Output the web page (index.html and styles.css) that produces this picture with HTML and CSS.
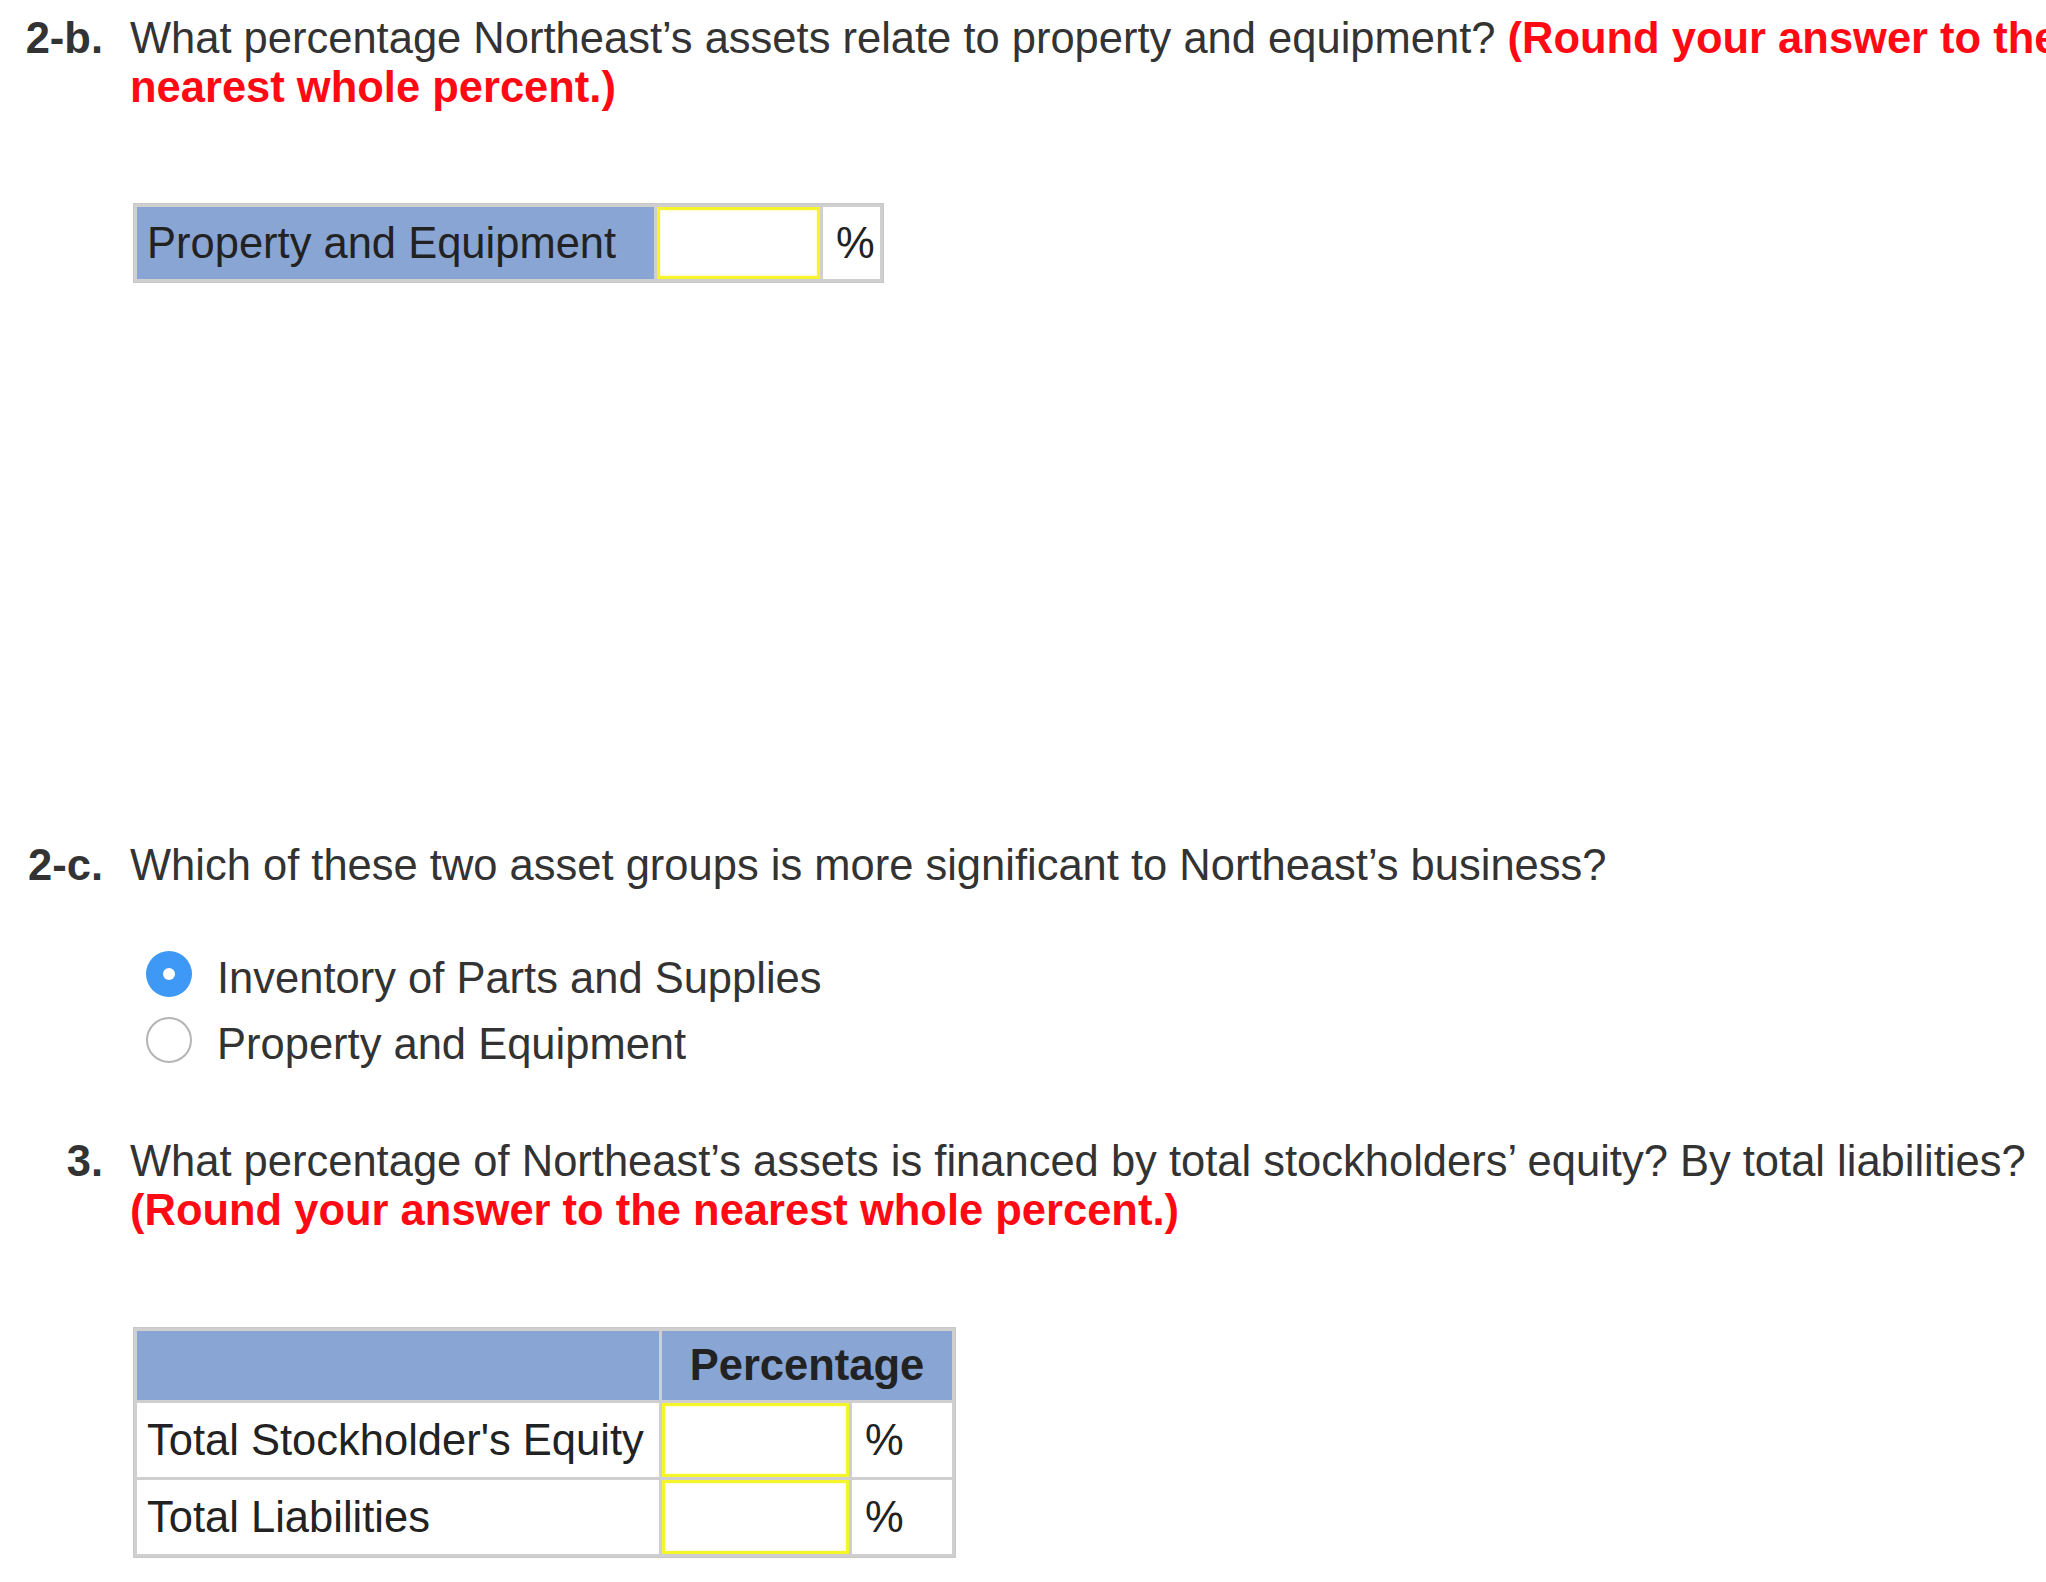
FILE: index.html
```html
<!DOCTYPE html>
<html lang="en">
<head>
<meta charset="utf-8">
<title>Questions</title>
<link rel="stylesheet" href="styles.css">
</head>
<body>
<div class="page">
  <section class="q q-2b">
    <div class="q-num">2-b.</div>
    <div class="q-body">
      <p class="q-text">What percentage Northeast’s assets relate to property and equipment? <span class="note">(Round your answer to the</span><br><span class="note">nearest whole percent.)</span></p>
      <table class="grid grid-one">
        <tr>
          <td class="head-cell label-one">Property and Equipment</td>
          <td class="input-cell in-one"><div class="answer"></div></td>
          <td class="unit-cell unit-one">%</td>
        </tr>
      </table>
    </div>
  </section>

  <section class="q q-2c">
    <div class="q-num">2-c.</div>
    <div class="q-body">
      <p class="q-text">Which of these two asset groups is more significant to Northeast’s business?</p>
      <div class="options">
        <div class="option"><span class="radio checked"></span><span class="opt-text">Inventory of Parts and Supplies</span></div>
        <div class="option"><span class="radio"></span><span class="opt-text">Property and Equipment</span></div>
      </div>
    </div>
  </section>

  <section class="q q-3">
    <div class="q-num">3.</div>
    <div class="q-body">
      <p class="q-text">What percentage of Northeast’s assets is financed by total stockholders’ equity? By total liabilities?<br><span class="note">(Round your answer to the nearest whole percent.)</span></p>
      <table class="grid grid-two">
        <tr class="hdr">
          <td class="head-cell label-two"></td>
          <td class="head-cell pct-head" colspan="2">Percentage</td>
        </tr>
        <tr class="row">
          <td class="row-label">Total Stockholder's Equity</td>
          <td class="input-cell in-two"><div class="answer"></div></td>
          <td class="unit-cell unit-two">%</td>
        </tr>
        <tr class="row">
          <td class="row-label">Total Liabilities</td>
          <td class="input-cell in-two"><div class="answer"></div></td>
          <td class="unit-cell unit-two">%</td>
        </tr>
      </table>
    </div>
  </section>
</div>
</body>
</html>
```

FILE: styles.css
```css
html, body {
  margin: 0;
  padding: 0;
  background: #ffffff;
}

body {
  width: 2046px;
  height: 1582px;
  overflow: hidden;
  font-family: "Liberation Sans", Arial, Helvetica, sans-serif;
  font-size: 43.5px;
  line-height: 49px;
  color: #333333;
}

.page {
  padding-top: 14px;
}

.q {
  display: flex;
  align-items: flex-start;
}

.q-num {
  flex: none;
  width: 103px;
  text-align: right;
  font-weight: bold;
  white-space: nowrap;
}

.q-body {
  margin-left: 27px;
  flex: 1;
  min-width: 0;
}

.q-text {
  margin: 0;
  white-space: nowrap;
}

.note {
  color: #ff0a14;
  font-weight: bold;
}

.q-2c {
  margin-top: 558px;
}

.q-3 {
  margin-top: 66px;
}

/* tables */
.grid {
  border-collapse: separate;
  border-spacing: 3px;
  background: #cfcfcf;
  border: 1px solid #c8c8c8;
  margin-left: 3px;
  color: #222222;
}

.grid td {
  padding: 0;
  white-space: nowrap;
}

.grid-one {
  margin-top: 91px;
}

.grid-one td {
  height: 72px;
}

.head-cell {
  background: #88a5d3;
}

.label-one {
  width: 507px;
  padding-left: 10px !important;
}

.input-cell {
  background: #ffffff;
  vertical-align: top;
}

.in-one {
  width: 163px;
}

.answer {
  box-sizing: border-box;
  height: 100%;
  min-height: 72px;
  border: 3px solid #f5f52a;
  box-shadow: inset 0 0 2px #ffff66;
  background: #ffffff;
}

.unit-cell {
  background: #ffffff;
  padding-left: 13px !important;
}

.unit-one {
  width: 44px;
}

/* radio options */
.options {
  margin-top: 61px;
  margin-left: 16px;
  display: flex;
  flex-direction: column;
  gap: 12px;
}

.option {
  display: flex;
  align-items: center;
  white-space: nowrap;
}

.radio {
  flex: none;
  box-sizing: border-box;
  width: 46px;
  height: 46px;
  border-radius: 50%;
  border: 2px solid #b4b4b4;
  background: #ffffff;
  margin-bottom: 8px;
  margin-right: 25px;
  position: relative;
}

.radio.checked {
  border: none;
  background: #3d98f6;
}

.radio.checked::after {
  content: "";
  position: absolute;
  left: 50%;
  top: 50%;
  width: 12px;
  height: 12px;
  margin: -6px 0 0 -6px;
  border-radius: 50%;
  background: #ffffff;
}

.opt-text {
  color: #333333;
}

/* table two */
.grid-two {
  margin-top: 92px;
}

.grid-two .hdr td {
  height: 69px;
}

.grid-two .row td {
  height: 74px;
}

.label-two {
  width: 522px;
}

.pct-head {
  text-align: center;
  font-weight: bold;
}

.row-label {
  background: #ffffff;
  padding-left: 10px !important;
}

.in-two {
  width: 187px;
}

.in-two .answer {
  min-height: 74px;
}

.unit-two {
  width: 87px;
}
```
